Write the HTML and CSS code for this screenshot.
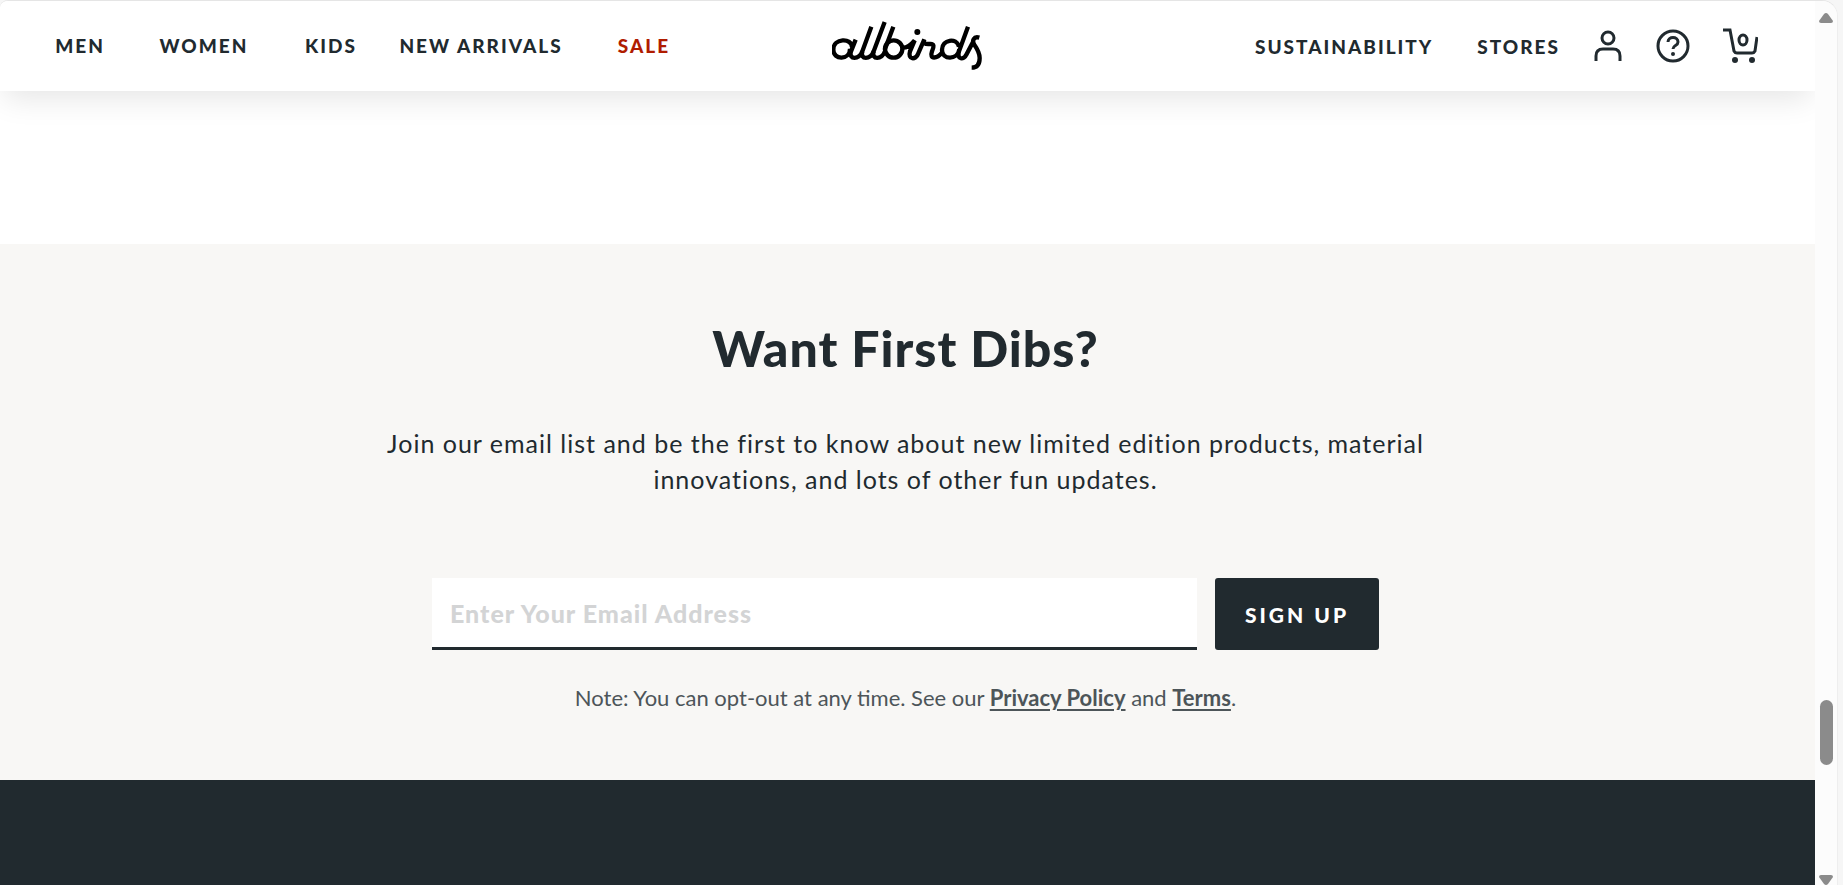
FILE: index.html
```
<!DOCTYPE html>
<html lang="en-US">
  <head>
    <meta charset="UTF-8" />
    <meta name="viewport" content="width=device-width, initial-scale=1" />
    <title>Allbirds</title>
    <link rel="stylesheet" href="styles.css">
  </head>
  <body>
    <div class="window">
      <div class="page">
        <header class="site-header">
          <nav class="nav-left">
            <a href="#">MEN</a>
            <a href="#">WOMEN</a>
            <a href="#">KIDS</a>
            <a href="#">NEW ARRIVALS</a>
            <a class="sale" href="#">SALE</a>
          </nav>
          <a class="logo" href="#" aria-label="allbirds">
            <svg width="152" height="50" viewBox="64 33 456 150">
              <path d="M118 116 C118 150 68 152 68 119 C68 84 124 82 124 112 M135 89 L121 124 C113 150 146 150 155 124" />
              <path d="M182 50 L155 124 C147 150 180 150 189 124" />
              <path d="M222 36 L189 124 C181 150 214 150 223 124" />
              <path d="M248 50 L222 120" />
              <circle class="bowl" cx="249" cy="117" r="26" />
              <path d="M274 113 C287 114 300 106 312 91 L298 124 C290 150 316 150 322 132 L341 88 C336 104 347 102 357 102 C372 101 370 110 364 124 C355 150 380 146 394 128" />
              <path d="M445 110 C438 82 394 88 394 119 C394 150 440 152 446 118 M472 50 L445 124 C437 150 460 150 467 134 L489 92 M506 83 C489 78 483 92 491 104 C501 118 507 128 507 144 C507 162 499 173 483 173" />
              <circle class="dot" cx="320" cy="66" r="9" />
            </svg>
          </a>
          <nav class="nav-right">
            <a class="sustainability" href="#">SUSTAINABILITY</a>
            <a href="#">STORES</a>
            <a class="icon" href="#" aria-label="Account">
              <svg width="36" height="36" viewBox="0 0 36 36">
                <circle cx="18" cy="10" r="6" />
                <path d="M6 33 V28 Q6 21 13 21 H23 Q30 21 30 28 V33" />
              </svg>
            </a>
            <a class="icon" href="#" aria-label="Help">
              <svg width="36" height="36" viewBox="0 0 36 36">
                <circle cx="17" cy="18" r="15" />
                <path d="M12 14 C12 8 22 8 22 14 C22 18 17 17 17 21" />
                <circle class="solid" cx="17" cy="26" r="2" />
              </svg>
            </a>
            <a class="icon" href="#" aria-label="Cart">
              <svg width="36" height="36" viewBox="0 0 36 36">
                <path d="M1 2 H8 L12 23 Q13 25 15 25 H30 Q32 25 33 23 L35 9" />
                <ellipse cx="21" cy="12" rx="4" ry="5" />
                <circle class="solid" cx="13" cy="32" r="3" />
                <circle class="solid" cx="30" cy="32" r="3" />
              </svg>
            </a>
          </nav>
        </header>

        <main>
          <section class="signup">
            <h1>Want First Dibs?</h1>
            <p class="intro">
              Join our email list and be the first to know about new limited edition products, material
              innovations, and lots of other fun updates.
            </p>
            <form class="signup-form">
              <input type="email" placeholder="Enter Your Email Address" aria-label="Email address">
              <button type="submit">SIGN UP</button>
            </form>
            <p class="note">
              Note: You can opt-out at any time. See our <a href="#">Privacy Policy</a> and <a href="#">Terms</a>.
            </p>
          </section>
        </main>
        <footer></footer>
      </div>

      <div class="scrollbar">
        <svg width="14" height="10" viewBox="0 0 14 10"><path d="M7 0 Q8 0 9 1 L14 8 Q14 10 12 10 H2 Q0 10 0 8 L5 1 Q6 0 7 0" /></svg>
        <div class="track-above"></div>
        <div class="thumb"></div>
        <div class="track-below"></div>
        <svg width="14" height="10" viewBox="0 0 14 10"><path d="M7 10 Q6 10 5 9 L0 2 Q0 0 2 0 H12 Q14 0 14 2 L9 9 Q8 10 7 10" /></svg>
      </div>
    </div>
  </body>
</html>
```
FILE: styles.css
```
* {
  box-sizing: border-box;
}

body {
  margin: 0;
  background-color: #f6f6f6;
  color: #212a2f;
  font-family: Lato, "Liberation Sans", sans-serif;
}

a {
  color: inherit;
}

.window {
  display: flex;
  height: 100vh;
  margin-right: 5px;
  overflow: hidden;
  border-top: 1px solid #e5e5e5;
  border-right: 1px solid #eeeeee;
  border-radius: 8px 16px 0 0;
  background-color: #fff;
}

.page {
  display: flex;
  flex: 1;
  flex-direction: column;
  overflow: hidden;
}

/* Header */
.site-header {
  display: grid;
  grid-template-columns: 1fr auto 1fr;
  align-items: center;
  height: 90px;
  background-color: #fff;
  box-shadow: 0 12px 30px -4px rgba(0, 0, 0, 0.1);
}

.nav-left,
.nav-right {
  font-size: 19px;
  font-weight: 900;
  letter-spacing: 2px;
}

.nav-left {
  display: grid;
  grid-template-columns: 124px 124px 130px 170px 156px;
  padding: 0 0 2px 18px;
  text-align: center;
}

.nav-right {
  display: flex;
  align-items: center;
  justify-content: flex-end;
  gap: 30px;
  padding-right: 57px;
}

.nav-left a,
.nav-right a {
  text-decoration: none;
  white-space: nowrap;
}

.nav-left .sale {
  color: #b01c00;
}

.nav-right .sustainability {
  margin-right: 14px;
}

.logo svg,
.icon svg {
  display: block;
  fill: none;
  stroke: #212a2f;
  stroke-width: 3;
}

.logo svg {
  stroke: #000;
  stroke-width: 13;
}

.logo .dot {
  fill: #000;
  stroke: none;
}

.icon .solid {
  fill: #212a2f;
  stroke: none;
}

/* Email sign up */
.signup {
  margin-top: 153px;
  padding: 72px 52px 66px 48px;
  background-color: #f8f7f5;
  text-align: center;
}

h1 {
  margin: 0;
  font-size: 50px;
  font-weight: 900;
  letter-spacing: 1px;
  line-height: 64px;
}

.intro {
  max-width: 1100px;
  margin: 45px auto 0;
  font-size: 25px;
  letter-spacing: 1px;
  line-height: 36px;
}

.signup-form {
  display: flex;
  gap: 18px;
  max-width: 947px;
  margin: 81px auto 0;
}

.signup-form input {
  flex: 1;
  min-width: 0;
  height: 72px;
  padding: 0 18px;
  border: 0;
  border-bottom: 3px solid #212a2f;
  background-color: #fff;
  color: #212a2f;
  font: 900 25px Lato, "Liberation Sans", sans-serif;
  letter-spacing: 1px;
}

.signup-form input::placeholder {
  color: #d3d4d5;
}

.signup-form button {
  width: 164px;
  border: 0;
  border-radius: 3px;
  background-color: #212a2f;
  color: #fff;
  font: 900 21px Lato, "Liberation Sans", sans-serif;
  letter-spacing: 3px;
}

.note {
  margin: 32px 0 0;
  color: #4d5559;
  font-size: 22px;
  line-height: 32px;
}

.note a {
  font-weight: 700;
  text-underline-offset: 3px;
}

footer {
  flex: 1;
  background-color: #212a2f;
}

/* Scrollbar */
.scrollbar {
  display: flex;
  flex-direction: column;
  align-items: center;
  width: 22px;
  padding-top: 12px;
  background-color: #fcfcfc;
}

.scrollbar svg {
  flex: none;
  fill: #8b8b8b;
}

.track-above {
  flex: 43;
}

.thumb {
  width: 13px;
  height: 65px;
  border-radius: 7px;
  background-color: #8b8b8b;
}

.track-below {
  flex: 7;
}
```
